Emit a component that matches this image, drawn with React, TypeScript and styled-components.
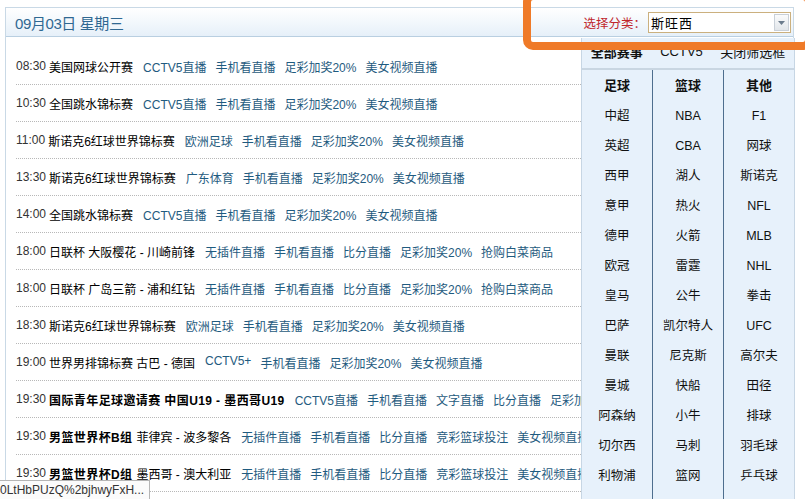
import React from 'react'
import styled, { createGlobalStyle } from 'styled-components'

type Match = {
  time: string
  title: string
  bold?: string
  rest?: string
  links: string[]
}

const matches: Match[] = [
  { time: '08:30', title: '美国网球公开赛', links: ['CCTV5直播', '手机看直播', '足彩加奖20%', '美女视频直播'] },
  { time: '10:30', title: '全国跳水锦标赛', links: ['CCTV5直播', '手机看直播', '足彩加奖20%', '美女视频直播'] },
  { time: '11:00', title: '斯诺克6红球世界锦标赛', links: ['欧洲足球', '手机看直播', '足彩加奖20%', '美女视频直播'] },
  { time: '13:30', title: '斯诺克6红球世界锦标赛', links: ['广东体育', '手机看直播', '足彩加奖20%', '美女视频直播'] },
  { time: '14:00', title: '全国跳水锦标赛', links: ['CCTV5直播', '手机看直播', '足彩加奖20%', '美女视频直播'] },
  { time: '18:00', title: '日联杯 大阪樱花 - 川崎前锋', links: ['无插件直播', '手机看直播', '比分直播', '足彩加奖20%', '抢购白菜商品'] },
  { time: '18:00', title: '日联杯 广岛三箭 - 浦和红钻', links: ['无插件直播', '手机看直播', '比分直播', '足彩加奖20%', '抢购白菜商品'] },
  { time: '18:30', title: '斯诺克6红球世界锦标赛', links: ['欧洲足球', '手机看直播', '足彩加奖20%', '美女视频直播'] },
  { time: '19:00', title: '世界男排锦标赛 古巴 - 德国', links: ['CCTV5+', '手机看直播', '足彩加奖20%', '美女视频直播'] },
  { time: '19:30', title: '', bold: '国际青年足球邀请赛 中国U19 - 墨西哥U19', links: ['CCTV5直播', '手机看直播', '文字直播', '比分直播', '足彩加奖20%'] },
  { time: '19:30', title: '', bold: '男篮世界杯B组', rest: '菲律宾 - 波多黎各', links: ['无插件直播', '手机看直播', '比分直播', '竞彩篮球投注', '美女视频直播'] },
  { time: '19:30', title: '', bold: '男篮世界杯D组', rest: '墨西哥 - 澳大利亚', links: ['无插件直播', '手机看直播', '比分直播', '竞彩篮球投注', '美女视频直播'] }
]

const columns = [
  { head: '足球', items: ['中超', '英超', '西甲', '意甲', '德甲', '欧冠', '皇马', '巴萨', '曼联', '曼城', '阿森纳', '切尔西', '利物浦'] },
  { head: '篮球', items: ['NBA', 'CBA', '湖人', '热火', '火箭', '雷霆', '公牛', '凯尔特人', '尼克斯', '快船', '小牛', '马刺', '篮网'] },
  { head: '其他', items: ['F1', '网球', '斯诺克', 'NFL', 'MLB', 'NHL', '拳击', 'UFC', '高尔夫', '田径', '排球', '羽毛球', '乒乓球'] }
]

export default function App() {
  return (
    <Page>
      <GlobalStyle />
      <Panel>
        <Header>
          <DateTitle>09月03日 星期三</DateTitle>
          <Picker>
            <PickerLabel>选择分类：</PickerLabel>
            <SelectBox>
              <SelectValue>斯旺西</SelectValue>
              <SelectArrow>
                <svg width="7" height="4" viewBox="0 0 7 4">
                  <path d="M0 0 L7 0 L3.5 4 Z" fill="#6b7b8c" />
                </svg>
              </SelectArrow>
            </SelectBox>
          </Picker>
        </Header>
        <List>
          {matches.map((m, i) => (
            <Row key={i}>
              <Time>{m.time}</Time>
              {m.title && <Title>{m.title}</Title>}
              {m.bold && <BoldTitle>{m.bold}</BoldTitle>}
              {m.rest && <Title>{m.rest}</Title>}
              <Links>
                {m.links.map((l) => (
                  <LinkItem key={l}>{l}</LinkItem>
                ))}
              </Links>
            </Row>
          ))}
        </List>
      </Panel>

      <Dropdown>
        <TopRow>
          <TopItem bold>全部赛事</TopItem>
          <TopItem>CCTV5</TopItem>
          <TopItem>关闭筛选框</TopItem>
        </TopRow>
        <Columns>
          {columns.map((c) => (
            <Column key={c.head}>
              <ColumnHead>{c.head}</ColumnHead>
              {c.items.map((it) => (
                <ColumnItem key={it}>{it}</ColumnItem>
              ))}
            </Column>
          ))}
        </Columns>
      </Dropdown>

      <Highlight />
      <StatusBar>0LtHbPUzQ%2bjhwyFxH...</StatusBar>
    </Page>
  )
}

const GlobalStyle = createGlobalStyle`
  html, body {
    margin: 0;
    padding: 0;
    background: #fff;
    overflow: hidden;
  }
  body {
    font-family: "Liberation Sans", "Noto Sans CJK SC", sans-serif;
  }
`

const Page = styled.div`
  position: relative;
  width: 805px;
  height: 499px;
  overflow: hidden;
  background: #fff;
`

const Panel = styled.div`
  margin: 7px 0 0 5px;
  width: 787px;
  height: 520px;
  border: 1px solid #c9d9e6;
  overflow: hidden;
`

const Header = styled.div`
  height: 28px;
  display: flex;
  align-items: center;
  justify-content: space-between;
  padding: 0 2px 0 9px;
  background: linear-gradient(#ffffff, #e6f0f9);
  border-bottom: 1px solid #b9cfe1;
`

const DateTitle = styled.div`
  font-size: 15px;
  color: #2f6892;
  letter-spacing: -0.4px;
`

const Picker = styled.div`
  display: flex;
  align-items: center;
  gap: 2px;
  margin-top: 1px;
`

const PickerLabel = styled.span`
  font-size: 12.5px;
  color: #c0262c;
`

const SelectBox = styled.div`
  width: 143px;
  height: 21px;
  display: flex;
  align-items: center;
  justify-content: space-between;
  border: 1px solid #cbb07e;
  background: #fff;
  box-sizing: border-box;
`

const SelectValue = styled.span`
  font-size: 13px;
  color: #000;
  padding-left: 2px;
  letter-spacing: 1px;
`

const SelectArrow = styled.span`
  width: 15px;
  height: 17px;
  margin-right: 1px;
  display: flex;
  align-items: center;
  justify-content: center;
  border: 1px solid #c9d0d8;
  box-sizing: border-box;
  background: linear-gradient(#fafbfc, #e2e6ea);
`

const List = styled.div`
  padding: 11px 0 0 10px;
`

const Row = styled.div`
  height: 36px;
  display: flex;
  align-items: center;
  white-space: nowrap;
  border-bottom: 1px dotted #b8b8b8;
  font-size: 12px;
`

const Time = styled.span`
  color: #333;
  margin-right: 3px;
`

const Title = styled.span`
  color: #000;
  margin-right: 4px;
`

const BoldTitle = styled.span`
  color: #000;
  font-weight: bold;
  letter-spacing: 0.4px;
  margin-right: 4px;
`

const Links = styled.span`
  display: flex;
  gap: 9px;
  margin-left: 6px;
`

const LinkItem = styled.span`
  color: #1f5b80;
`

const Dropdown = styled.div`
  position: absolute;
  left: 581px;
  top: 38px;
  width: 214px;
  height: 470px;
  background: #e7f1fb;
  border-left: 1px solid #c7d6e4;
  border-right: 1px solid #c7d6e4;
  box-sizing: border-box;
`

const TopRow = styled.div`
  height: 32px;
  display: flex;
  align-items: center;
  justify-content: space-around;
  padding-bottom: 3px;
  box-sizing: border-box;
  border-bottom: 2px solid #c9d6e2;
  font-size: 13px;
`

const TopItem = styled.span<{ bold?: boolean }>`
  font-weight: ${(p) => (p.bold ? 'bold' : 'normal')};
  color: #111;
`

const Columns = styled.div`
  display: grid;
  grid-template-columns: 71px 71px 1fr;
`

const Column = styled.div`
  display: flex;
  flex-direction: column;
  align-items: center;
  padding-top: 1px;
  height: 440px;
  &:not(:last-child) {
    border-right: 1px solid #4e6e8e;
  }
`

const ColumnHead = styled.div`
  height: 30px;
  line-height: 30px;
  font-size: 13px;
  font-weight: bold;
  color: #111;
`

const ColumnItem = styled.div`
  height: 30px;
  line-height: 30px;
  font-size: 12.5px;
  color: #111;
`

const Highlight = styled.div`
  position: absolute;
  left: 523px;
  top: -8px;
  width: 290px;
  height: 58px;
  border: 8px solid #ef7a28;
  border-radius: 10px;
  box-sizing: border-box;
`

const StatusBar = styled.div`
  position: absolute;
  left: -3px;
  bottom: 0;
  width: 153px;
  height: 19px;
  line-height: 18px;
  padding-left: 2px;
  box-sizing: border-box;
  background: #fbfbfb;
  border: 1px solid #b5b5b5;
  border-bottom: none;
  font-size: 12px;
  color: #333;
  white-space: nowrap;
  overflow: hidden;
`
